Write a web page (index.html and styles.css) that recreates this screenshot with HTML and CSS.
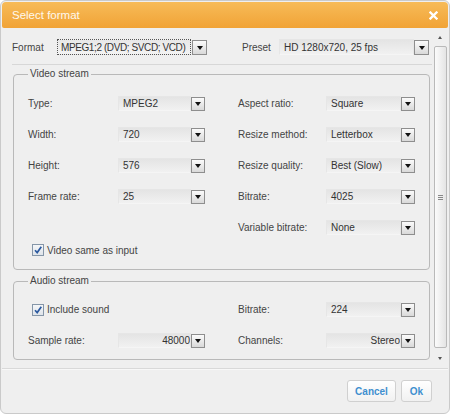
FILE: index.html
```html
<!DOCTYPE html>
<html>
<head>
<meta charset="utf-8">
<title>Select format</title>
<link rel="stylesheet" href="styles.css">
</head>
<body>
<div class="dialog">
  <div class="titlebar">
    <span class="title">Select format</span>
    <svg class="close" width="9" height="9" viewBox="0 0 9 9"><path d="M1.5 1.5L7.5 7.5M7.5 1.5L1.5 7.5" stroke="#fff" stroke-width="2.3" stroke-linecap="square"/></svg>
  </div>
  <div class="body">
    <div class="content">
      <div class="toprow">
        <span class="toplabel fmt">Format</span>
        <div class="select top focus"><span class="value">MPEG1;2 (DVD; SVCD; VCD)</span><span class="arrow"></span></div>
        <span class="toplabel preset">Preset</span>
        <div class="select top"><span class="value">HD 1280x720, 25 fps</span><span class="arrow"></span></div>
      </div>

      <div class="group video">
        <div class="legend">Video stream</div>
        <div class="grid rows5">
          <span class="label l1">Type:</span>
          <div class="select s1"><span class="value">MPEG2</span><span class="arrow"></span></div>
          <span class="label l2">Aspect ratio:</span>
          <div class="select s2"><span class="value">Square</span><span class="arrow"></span></div>

          <span class="label l1">Width:</span>
          <div class="select s1"><span class="value">720</span><span class="arrow"></span></div>
          <span class="label l2">Resize method:</span>
          <div class="select s2"><span class="value">Letterbox</span><span class="arrow"></span></div>

          <span class="label l1">Height:</span>
          <div class="select s1"><span class="value">576</span><span class="arrow"></span></div>
          <span class="label l2">Resize quality:</span>
          <div class="select s2"><span class="value">Best (Slow)</span><span class="arrow"></span></div>

          <span class="label l1">Frame rate:</span>
          <div class="select s1"><span class="value">25</span><span class="arrow"></span></div>
          <span class="label l2">Bitrate:</span>
          <div class="select s2"><span class="value">4025</span><span class="arrow"></span></div>

          <span class="label l2">Variable bitrate:</span>
          <div class="select s2"><span class="value">None</span><span class="arrow"></span></div>
        </div>
        <label class="check">
          <span class="box"><svg width="10" height="10" viewBox="0 0 10 10"><path d="M2 5.2L4.2 7.6L8.3 1.8" fill="none" stroke="#2c5aa0" stroke-width="1.7"/></svg></span>
          <span>Video same as input</span>
        </label>
      </div>

      <div class="group audio">
        <div class="legend">Audio stream</div>
        <div class="grid rows2">
          <label class="check span3">
            <span class="box"><svg width="10" height="10" viewBox="0 0 10 10"><path d="M2 5.2L4.2 7.6L8.3 1.8" fill="none" stroke="#2c5aa0" stroke-width="1.7"/></svg></span>
            <span>Include sound</span>
          </label>
          <span class="label l2">Bitrate:</span>
          <div class="select s2"><span class="value">224</span><span class="arrow"></span></div>

          <span class="label l1">Sample rate:</span>
          <div class="select s1 right"><span class="value">48000</span><span class="arrow"></span></div>
          <span class="label l2">Channels:</span>
          <div class="select s2 right"><span class="value">Stereo</span><span class="arrow"></span></div>
        </div>
      </div>
    </div>

    <div class="scrollbar">
      <span class="sb-btn"><span class="tri-up"></span></span>
      <div class="thumb"><span class="grip"></span></div>
      <span class="sb-btn"><span class="tri-down"></span></span>
    </div>
  </div>
  <div class="footer">
    <button class="btn cancel">Cancel</button>
    <button class="btn ok">Ok</button>
  </div>
</div>
</body>
</html>
```

FILE: styles.css
```css
* { box-sizing: border-box; }
html, body { margin: 0; padding: 0; background: #fff; }
body {
  font-family: "Liberation Sans", Arial, sans-serif;
  font-size: 10px;
  color: #444;
}

.dialog {
  width: 450px;
  height: 414px;
  border: 1px solid #cacaca;
  border-radius: 6px;
  background: #efefef;
  padding: 1px;
  display: flex;
  flex-direction: column;
  overflow: hidden;
}

.titlebar {
  height: 26px;
  flex: none;
  display: flex;
  align-items: center;
  justify-content: space-between;
  padding: 0 10px;
  background: linear-gradient(#f7bb58, #f1a336);
  border-radius: 4px 4px 2px 2px;
}
.title { font-size: 11.5px; color: #fff8ec; }
.close { display: block; }

.body { height: 340px; flex: none; display: flex; }
.content { flex: 1; min-width: 0; }

.toprow {
  display: flex;
  align-items: center;
  margin-left: 10px;
  padding: 11px 0 9px;
  border-bottom: 1px solid #d7d7d7;
}
.toplabel { color: #444; }
.fmt { width: 45px; }
.preset { width: 37px; margin-left: 35px; }

.select {
  display: flex;
  align-items: center;
  height: 15px;
}
.select.top { width: 150px; height: 16px; }
.value {
  flex: 1;
  min-width: 0;
  height: 100%;
  display: flex;
  align-items: center;
  padding-left: 4px;
  color: #333;
  white-space: nowrap;
  overflow: hidden;
  border: 1px solid #e6e6e6;
  border-bottom-color: #f5f5f5;
  background: linear-gradient(#e4e4e4, #f1f1f1);
}
.focus .value {
  border: 1px dotted #555;
  background: linear-gradient(#e8e8e8, #f3f3f3);
  margin-right: 1px;
  padding-left: 3px;
  letter-spacing: -0.4px;
}
.select.right .value { justify-content: flex-end; padding-left: 0; padding-right: 0; }
.arrow {
  width: 14px;
  height: 14px;
  flex: none;
  border: 1px solid #8e8e8e;
  background: linear-gradient(#fbfbfb, #d9d9d9);
  display: flex;
  align-items: center;
  justify-content: center;
}
.top .arrow { width: 15px; height: 15px; }
.arrow::after {
  content: "";
  border-left: 3.5px solid transparent;
  border-right: 3.5px solid transparent;
  border-top: 4px solid #111;
  margin-top: 1px;
}

.group {
  border: 1px solid #b9b9b9;
  border-radius: 4px;
  margin: 9px 2px 0 11px;
  padding: 0 14px 12px 14px;
}
.audio { margin-top: 11px; padding-bottom: 3px; }
.legend {
  display: table;
  margin: -7px 0 0 0;
  padding: 0 2px;
  line-height: 12px;
  background: #efefef;
  color: #444;
}

.grid {
  display: grid;
  grid-template-columns: 90px 87px 33px 88px 89px;
  align-items: center;
  margin-top: 8px;
}
.rows5 { grid-template-rows: repeat(5, 31px); }
.rows2 { grid-template-rows: repeat(2, 31px); margin-top: 7px; }
.l1 { grid-column: 1; }
.s1 { grid-column: 2; }
.l2 { grid-column: 4; }
.s2 { grid-column: 5; }
.span3 { grid-column: 1 / span 3; }
.label { color: #444; white-space: nowrap; }

.check {
  display: flex;
  align-items: center;
  height: 14px;
  margin-left: 4px;
  color: #444;
}
.box {
  width: 12px;
  height: 12px;
  flex: none;
  margin-right: 3px;
  border: 1px solid #8596a8;
  background: linear-gradient(#f4f6f8, #dfe4ea);
  display: flex;
  align-items: center;
  justify-content: center;
}
.box svg { display: block; }

.scrollbar {
  width: 16px;
  flex: none;
  display: flex;
  flex-direction: column;
  align-items: center;
  padding: 2px 0;
}
.sb-btn {
  height: 15px;
  width: 14px;
  flex: none;
  display: flex;
  align-items: center;
  justify-content: center;
}
.tri-up, .tri-down {
  border-left: 2.5px solid transparent;
  border-right: 2.5px solid transparent;
}
.tri-up { border-bottom: 3px solid #555; }
.tri-down { border-top: 3px solid #555; }
.thumb {
  flex: 1;
  width: 13px;
  margin: 1px 0 3px;
  border: 1px solid #b9b9b9;
  border-radius: 2px;
  background: linear-gradient(90deg, #fbfbfb, #e4e4e4);
  display: flex;
  align-items: center;
  justify-content: center;
}
.grip {
  width: 5px;
  height: 5px;
  border-top: 1px solid #888;
  border-bottom: 1px solid #888;
  background: linear-gradient(#888, #888) center / 100% 1px no-repeat;
}

.footer {
  flex: 1;
  border-top: 1px solid #d9d9d9;
  box-shadow: inset 0 1px 0 #f8f8f8;
  display: flex;
  justify-content: flex-end;
  align-items: flex-start;
  gap: 5px;
  padding: 11px 16px 0 0;
}
.btn {
  height: 22px;
  padding: 0;
  border: 1px solid #d0d0d0;
  border-radius: 3px;
  background: linear-gradient(#ffffff, #f1f1f1);
  color: #3f8fcf;
  font: bold 10px "Liberation Sans", Arial, sans-serif;
}
.cancel { width: 49px; }
.ok { width: 31px; }
```
